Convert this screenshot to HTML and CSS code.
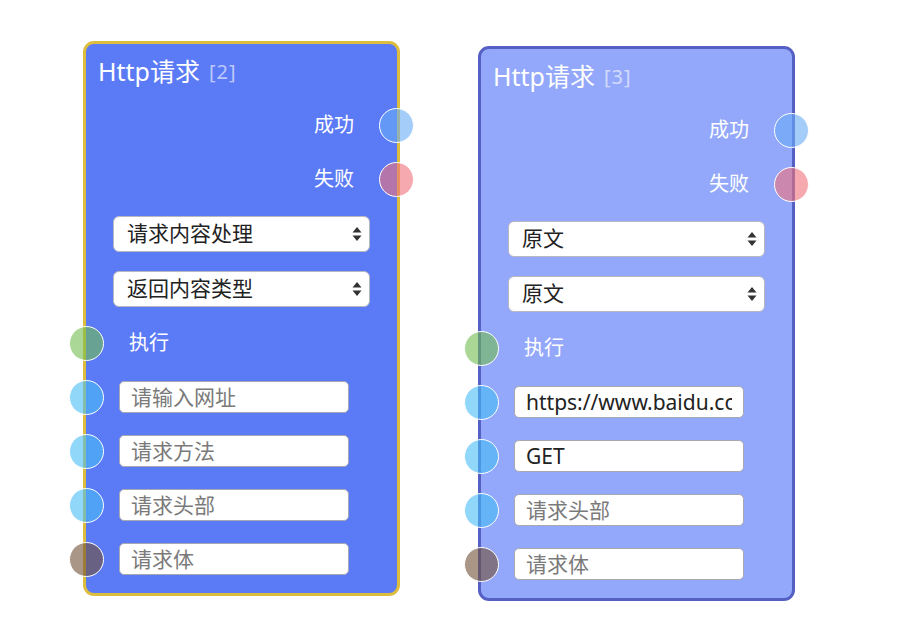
FILE: index.html
```html
<!DOCTYPE html>
<html lang="zh">
<head>
<meta charset="utf-8">
<title>Http请求</title>
<link rel="stylesheet" href="styles.css">
</head>
<body>
<div class="canvas">
  <div class="node node-selected node-a">
    <div class="node-title">Http请求 <span class="node-id">[2]</span></div>
    <div class="row row-out"><span class="label">成功</span><span class="port port-right port-success"></span></div>
    <div class="row row-out"><span class="label">失败</span><span class="port port-right port-fail"></span></div>
    <div class="row row-select"><div class="select"><span>请求内容处理</span><svg class="arrows" width="10" height="16" viewBox="0 0 10 16"><path d="M5 1 L9.5 6.5 L0.5 6.5 Z M5 15 L9.5 9.5 L0.5 9.5 Z" fill="#333"/></svg></div></div>
    <div class="row row-select"><div class="select"><span>返回内容类型</span><svg class="arrows" width="10" height="16" viewBox="0 0 10 16"><path d="M5 1 L9.5 6.5 L0.5 6.5 Z M5 15 L9.5 9.5 L0.5 9.5 Z" fill="#333"/></svg></div></div>
    <div class="row row-in"><span class="port port-left port-exec"></span><span class="label">执行</span></div>
    <div class="row row-in"><span class="port port-left port-data"></span><input class="field" placeholder="请输入网址"></div>
    <div class="row row-in"><span class="port port-left port-data"></span><input class="field" placeholder="请求方法"></div>
    <div class="row row-in"><span class="port port-left port-data"></span><input class="field" placeholder="请求头部"></div>
    <div class="row row-in"><span class="port port-left port-body"></span><input class="field" placeholder="请求体"></div>
  </div>

  <div class="node node-b">
    <div class="node-title">Http请求 <span class="node-id">[3]</span></div>
    <div class="row row-out"><span class="label">成功</span><span class="port port-right port-success"></span></div>
    <div class="row row-out"><span class="label">失败</span><span class="port port-right port-fail"></span></div>
    <div class="row row-select"><div class="select"><span>原文</span><svg class="arrows" width="10" height="16" viewBox="0 0 10 16"><path d="M5 1 L9.5 6.5 L0.5 6.5 Z M5 15 L9.5 9.5 L0.5 9.5 Z" fill="#333"/></svg></div></div>
    <div class="row row-select"><div class="select"><span>原文</span><svg class="arrows" width="10" height="16" viewBox="0 0 10 16"><path d="M5 1 L9.5 6.5 L0.5 6.5 Z M5 15 L9.5 9.5 L0.5 9.5 Z" fill="#333"/></svg></div></div>
    <div class="row row-in"><span class="port port-left port-exec"></span><span class="label">执行</span></div>
    <div class="row row-in"><span class="port port-left port-data"></span><input class="field" value="https://www.baidu.com"></div>
    <div class="row row-in"><span class="port port-left port-data"></span><input class="field" value="GET"></div>
    <div class="row row-in"><span class="port port-left port-data"></span><input class="field" placeholder="请求头部"></div>
    <div class="row row-in"><span class="port port-left port-body"></span><input class="field" placeholder="请求体"></div>
  </div>
</div>
</body>
</html>
```

FILE: styles.css
```css
* { box-sizing: border-box; }

html, body {
  margin: 0;
  padding: 0;
  background: #ffffff;
}

body {
  font-family: "Noto Sans", "Noto Sans CJK SC", sans-serif;
  color: #ffffff;
}

.canvas {
  position: relative;
  width: 918px;
  height: 628px;
  overflow: hidden;
}

.node {
  position: absolute;
  width: 317px;
  height: 555px;
  border: 3px solid;
  border-radius: 11px;
  padding-bottom: 7px;
  display: flex;
  flex-direction: column;
}

.node-a {
  left: 83px;
  top: 41px;
  background: #5b7af6;
  border-color: #dcbd3e;
}

.node-b {
  left: 478px;
  top: 46px;
  background: #93a8fa;
  border-color: #5560c4;
}

.node-title {
  height: 54px;
  display: flex;
  align-items: center;
  padding-left: 12px;
  font-size: 25px;
  line-height: 1;
  white-space: nowrap;
}

.node-id {
  font-size: 20px;
  color: rgba(255, 255, 255, 0.6);
  margin-left: 9px;
  padding-top: 2px;
  letter-spacing: 1px;
}

.row {
  position: relative;
  height: 54px;
  display: flex;
  align-items: center;
}

.row-select { height: 55px; padding: 0 27px; }

.row-out {
  justify-content: flex-end;
  padding-right: 43px;
}

.row-in { padding-left: 33px; }

.label {
  font-size: 20px;
  line-height: 1;
}

.row-in .label { padding-left: 10px; }

.port {
  position: absolute;
  top: 50%;
  width: 35px;
  height: 35px;
  margin-top: -17.5px;
  border-radius: 50%;
  border: 1.5px solid #ffffff;
}

.port-right { right: -17px; }
.port-left { left: -17px; }

.port-success { background: rgba(105, 172, 247, 0.6); }
.port-fail { background: rgba(240, 113, 122, 0.6); }
.port-exec { background: rgba(113, 188, 80, 0.6); }
.port-data { background: rgba(72, 188, 247, 0.6); }
.port-body { background: rgba(113, 80, 55, 0.6); }

.select {
  flex: 1;
  height: 36px;
  background: #ffffff;
  border: 1px solid #b8b8c0;
  border-radius: 6px;
  display: flex;
  align-items: center;
  justify-content: space-between;
  padding: 0 7px 0 13px;
  color: #222222;
  font-size: 21px;
  line-height: 1;
}

.arrows { display: block; }

.field {
  width: 230px;
  height: 32px;
  border: 1px solid #a8a8b0;
  border-radius: 5px;
  background: #ffffff;
  padding: 0 11px;
  font-family: "Noto Sans", "Noto Sans CJK SC", sans-serif;
  font-size: 21px;
  color: #222222;
  outline: none;
}

.field::placeholder { color: #7a7a7a; }
```
